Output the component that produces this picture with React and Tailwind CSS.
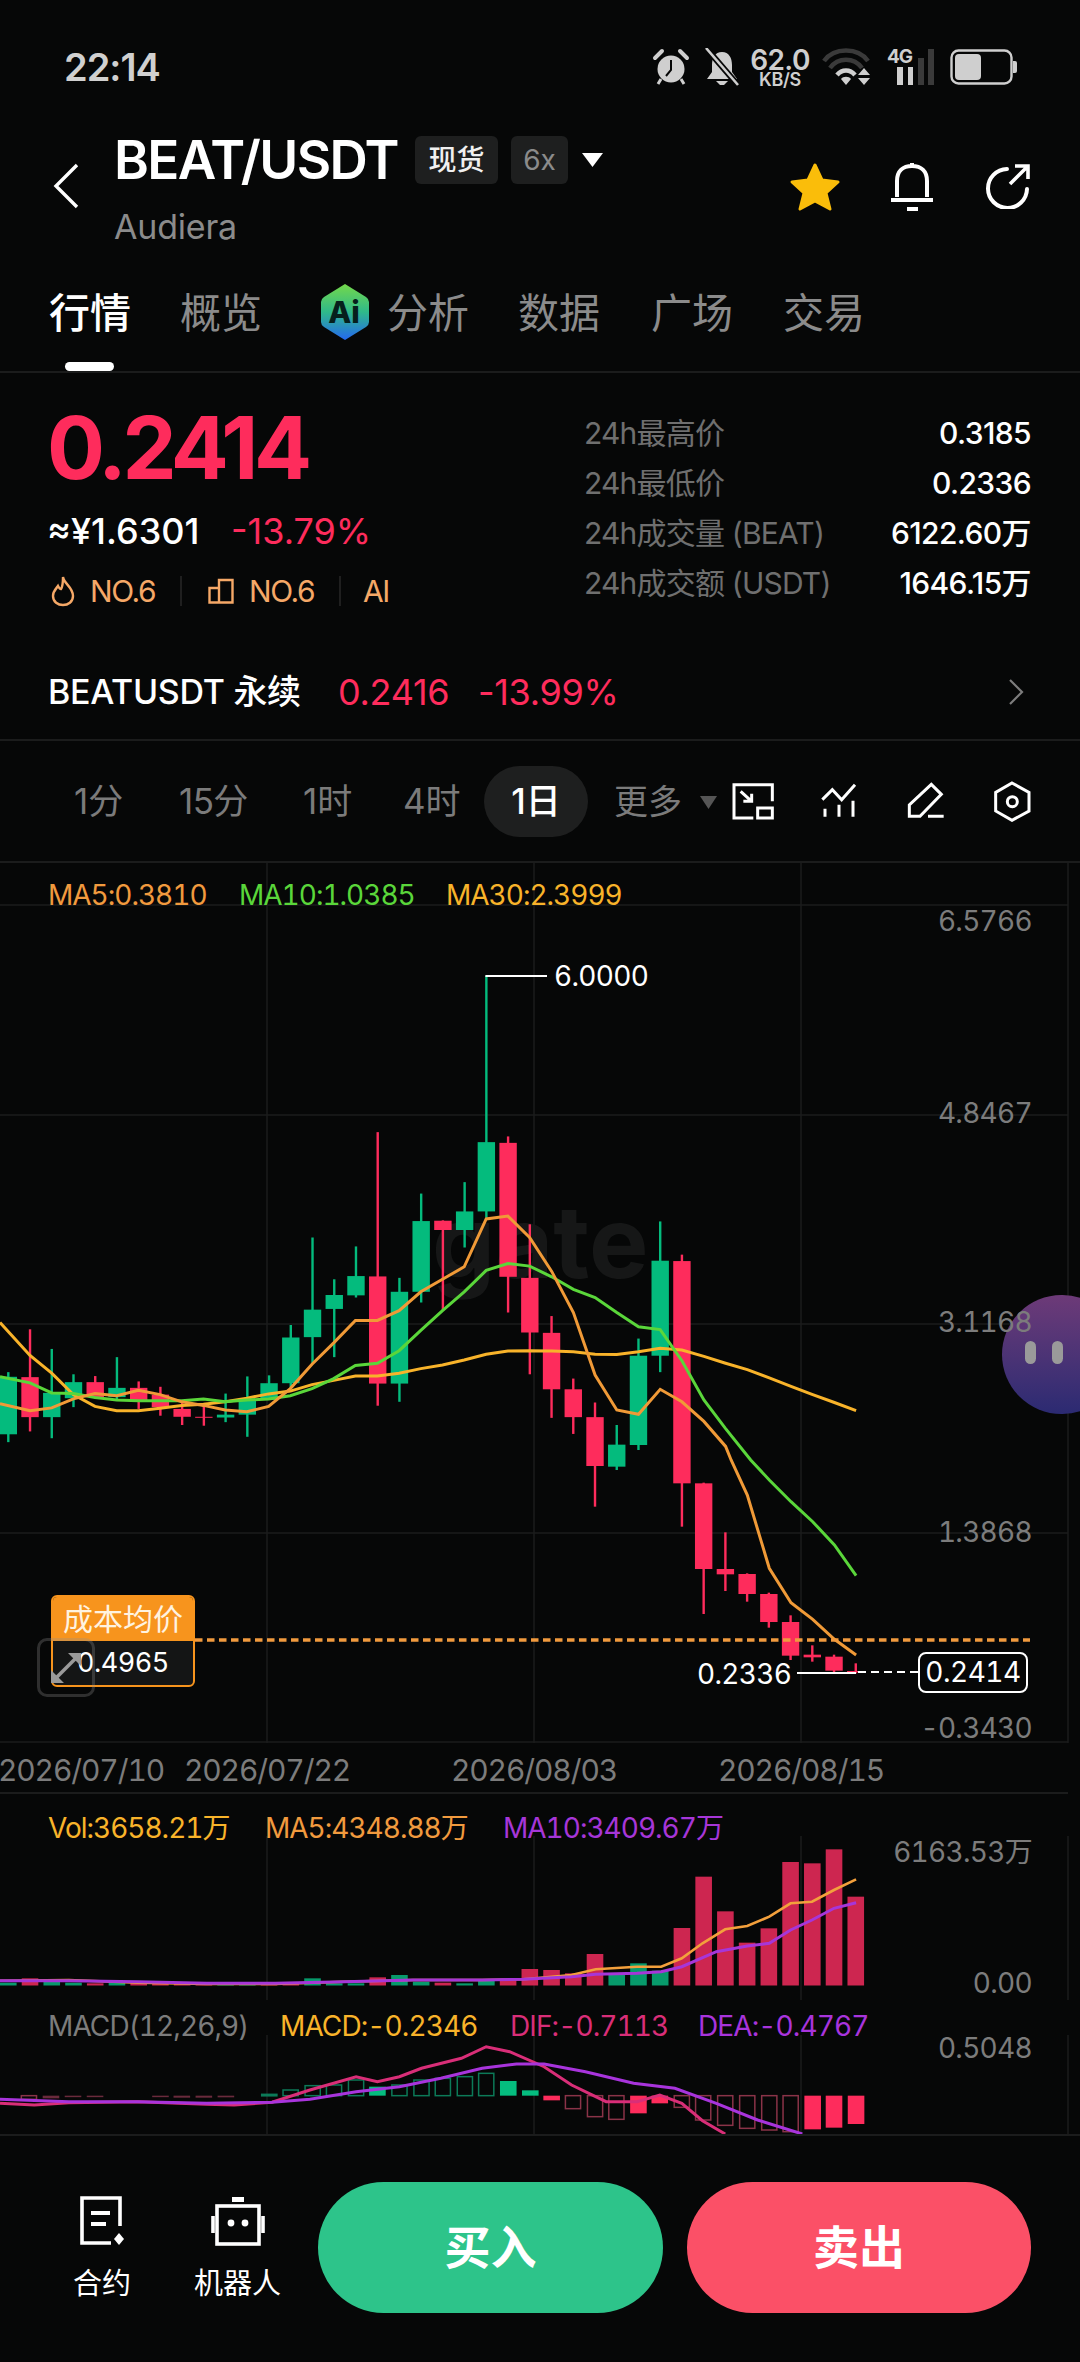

import React from "react";

const z3 = (x, y) => [x / 2.904, 900 + y / 2.8];
const z4 = (x, y) => [540 + x / 2.904, 900 + y / 2.8];
const z6 = (x, y) => [540 + x / 2.904, 1460 + y / 3];
const z7 = (x, y) => [x / 1.452, 1760 + y / 3];
const Y3 = (y) => 900 + y / 2.8;
const Y6 = (y) => 1460 + y / 3;
const pts = (a) => a.map((p) => p[0].toFixed(1) + "," + p[1].toFixed(1)).join(" ");
const cx = (i) => 8.3 + 21.73 * i;
const RED = "#fe2c5c";
const GREEN = "#04bb7d";

// [color, wickTop, wickBottom, bodyTop, bodyBottom]
const C = [
  ["g", Y3(1322), Y3(1518), Y3(1335), Y3(1496)],
  ["r", Y3(1202), Y3(1488), Y3(1336), Y3(1448)],
  ["g", Y3(1257), Y3(1507), Y3(1380), Y3(1448)],
  ["g", Y3(1328), Y3(1420), Y3(1350), Y3(1395)],
  ["r", Y3(1333), Y3(1395), Y3(1350), Y3(1392)],
  ["g", Y3(1280), Y3(1400), Y3(1366), Y3(1392)],
  ["r", Y3(1348), Y3(1425), Y3(1366), Y3(1402)],
  ["r", Y3(1363), Y3(1444), Y3(1385), Y3(1420)],
  ["r", Y3(1405), Y3(1470), Y3(1425), Y3(1447)],
  ["r", Y3(1415), Y3(1472), Y3(1447), Y3(1449)],
  ["g", Y3(1382), Y3(1462), Y3(1441), Y3(1449)],
  ["g", Y3(1334), Y3(1503), Y3(1400), Y3(1441)],
  ["g", Y3(1331), Y3(1400), Y3(1353), Y3(1400)],
  ["g", Y3(1190), Y3(1365), Y3(1225), Y3(1353)],
  ["g", Y3(945), Y3(1298), Y3(1147), Y3(1224)],
  ["g", Y3(1062), Y3(1280), Y3(1106), Y3(1145)],
  ["g", Y3(970), Y3(1113), Y3(1053), Y3(1107)],
  ["r", Y3(650), Y3(1416), Y3(1054), Y3(1354)],
  ["g", Y3(1058), Y3(1405), Y3(1097), Y3(1354)],
  ["g", Y3(822), Y3(1127), Y3(899), Y3(1097)],
  ["r", Y3(897), Y3(1150), Y3(898), Y3(924)],
  ["g", Y3(790), Y3(973), Y3(872), Y3(924)],
  ["g", Y3(212), Y3(890), Y3(678), Y3(872)],
  ["r", Y3(662), Y3(1155), Y3(680), Y3(1055)],
  ["r", Y3(908), Y3(1328), Y3(1058), Y3(1211)],
  ["r", Y3(1165), Y3(1450), Y3(1212), Y3(1370)],
  ["r", Y3(1340), Y3(1495), Y3(1370), Y3(1448)],
  ["r", Y3(1407), Y6(140), Y3(1448), Y6(18)],
  ["g", Y3(1470), Y6(30), Y3(1525), Y6(20)],
  ["g", Y3(1228), Y3(1540), Y3(1276), Y3(1526)],
  ["g", Y3(900), Y3(1322), Y3(1010), Y3(1276)],
  ["r", Y3(993), Y6(200), Y3(1011), Y6(70)],
  ["r", Y6(68), Y6(462), Y6(70), Y6(327)],
  ["r", Y6(217), Y6(393), Y6(327), Y6(343)],
  ["r", Y6(340), Y6(425), Y6(342), Y6(402)],
  ["r", Y6(398), Y6(503), Y6(402), Y6(486)],
  ["r", Y6(466), Y6(600), Y6(486), Y6(587)],
  ["r", Y6(556), Y6(605), Y6(584), Y6(592)],
  ["r", Y6(584), Y6(636), Y6(590), Y6(632)],
  ["r", Y6(610), Y6(640), Y6(633), Y6(637)],
];

const MA5 = [
  ...[[0,1410],[87,1430],[150,1422],[213,1397],[276,1382],[339,1388],[402,1373],[465,1385],[528,1405],[591,1415],[654,1428],[717,1433],[780,1418],[843,1368],[906,1300],[969,1240],[1032,1177],[1096,1177],[1159,1150],[1222,1097],[1285,1062],[1348,1027],[1412,893],[1475,885],[1538,945]].map((p) => z3(...p)),
  ...[[34,1040],[97,1155],[160,1330],[223,1428],[286,1440],[349,1370],[412,1405],[476,1460],[539,1530]].map((p) => z4(...p)),
  ...[[555,0],[602,105],[666,325],[729,428],[792,478],[855,538],[918,585]].map((p) => z6(...p)),
];
const MA10 = [
  ...[[0,1335],[87,1352],[150,1380],[213,1382],[276,1393],[339,1400],[402,1402],[465,1402],[528,1402],[591,1397],[654,1405],[717,1400],[780,1397],[843,1388],[906,1368],[969,1340],[1032,1303],[1096,1297],[1159,1262],[1222,1205],[1285,1150],[1348,1097],[1412,1037],[1475,1018],[1538,1025]].map((p) => z3(...p)),
  ...[[34,1055],[97,1090],[160,1113],[223,1155],[286,1195],[349,1203],[412,1290],[476,1400],[539,1480]].map((p) => z4(...p)),
  ...[[612,0],[666,60],[729,125],[792,185],[855,255],[918,347]].map((p) => z6(...p)),
];
const MA30 = [
  ...[[0,1183],[87,1275],[150,1325],[213,1385],[276,1418],[339,1430],[402,1430],[465,1423],[528,1415],[591,1412],[654,1405],[717,1395],[780,1383],[843,1375],[906,1357],[969,1345],[1032,1333],[1096,1333],[1159,1325],[1222,1312],[1285,1302],[1348,1288],[1412,1272],[1475,1263],[1538,1262]].map((p) => z3(...p)),
  ...[[34,1263],[97,1265],[160,1272],[223,1273],[286,1265],[349,1255],[412,1260],[476,1278],[539,1297],[602,1315],[666,1338],[729,1362],[792,1385],[855,1407],[918,1430]].map((p) => z4(...p)),
];

const VOL = [
  ["g",668],["r",655],["g",657],["g",668],["r",670],["g",665],["r",668],["r",672],["r",672],["r",673],["g",672],["g",672],["r",672],
  ["r",670],["g",655],["g",670],["g",670],["r",652],["g",645],["g",665],["r",668],["g",670],["g",662],["r",660],["r",627],["r",630],["r",640],["r",582],
  ["g",640],["g",610],["g",632],["r",504],["r",350],["r",454],["r",548],["r",505],["r",306],["r",310],["r",268],["r",410],
];
const VMA5 = [[0,662],[100,660],[200,668],[300,672],[400,672],[500,665],[600,660],[700,660],[760,658],[830,645],[865,628],[925,620],[960,620],[990,595],[1020,550],[1053,508],[1085,498],[1117,470],[1148,430],[1179,425],[1211,390],[1243,358]].map((p) => z7(...p));
const VMA10 = [[0,662],[100,662],[200,665],[300,670],[400,670],[500,665],[600,660],[700,660],[760,658],[830,650],[865,643],[925,640],[960,635],[990,620],[1040,575],[1085,558],[1117,550],[1148,510],[1179,480],[1211,445],[1243,428]].map((p) => z7(...p));

// [z7 x, value y, solid?]
const HIST = [
  [42,1018,0,"r"],[74,1015,1,"d"],[106,1011,1,"d"],[138,1011,1,"d"],[233,1011,1,"d"],[264,1013,1,"d"],[296,1013,1,"d"],[328,1012,1,"d"],
  [391,1003,0,"g"],[422,990,0,"g"],[454,977,0,"g"],[485,975,0,"g"],[517,960,0,"g"],[548,980,1,"g"],[580,975,0,"g"],[612,960,0,"g"],[643,955,0,"g"],[675,950,0,"g"],[706,940,0,"g"],[738,963,1,"g"],[770,991,1,"g"],
  [801,1021,1,"r"],[832,1046,0,"r"],[864,1070,0,"r"],[895,1078,0,"r"],[927,1060,1,"r"],[958,1030,1,"r"],[990,1042,0,"r"],[1021,1080,0,"r"],[1053,1096,0,"r"],[1085,1105,0,"r"],[1117,1110,0,"r"],[1148,1115,0,"r"],[1180,1108,1,"r"],[1211,1103,1,"r"],[1243,1092,1,"r"],
];
const DIF = [[0,1030],[50,1035],[100,1028],[200,1025],[300,1033],[340,1035],[395,1027],[450,990],[517,950],[548,965],[580,950],[612,925],[670,895],[706,860],[740,875],[790,920],[830,975],[880,1025],[925,1025],[958,1005],[990,1030],[1020,1082],[1053,1122]].map((p) => z7(...p));
const DEA = [[0,1018],[100,1025],[200,1025],[300,1030],[395,1027],[450,1018],[517,995],[580,980],[640,955],[700,925],[750,912],[790,912],[850,935],[920,970],[980,985],[1040,1030],[1100,1080],[1165,1122]].map((p) => z7(...p));

function Chart() {
  return (
    <svg className="absolute inset-0" width="1080" height="880" viewBox="0 863 1080 880">
      {[905, 1115, 1324, 1533, 1742].map((y) => (
        <line key={y} x1="0" x2="1068" y1={y} y2={y} stroke="#1b1c1c" strokeWidth="1.5" />
      ))}
      {[267, 534, 801, 1068].map((x) => (
        <line key={x} x1={x} x2={x} y1="863" y2="1743" stroke="#1b1c1c" strokeWidth="1.5" />
      ))}
      <text x="432" y="1278" fontFamily="Inter" fontWeight="700" fontSize="100" fill="#161717">gate</text>
      {C.map((c, i) => {
        const col = c[0] === "g" ? GREEN : RED;
        return (
          <g key={i} fill={col}>
            <rect x={cx(i) - 1.2} width="2.4" y={c[1]} height={c[2] - c[1]} />
            <rect x={cx(i) - 8.7} width="17.4" y={c[3]} height={Math.max(c[4] - c[3], 1)} />
          </g>
        );
      })}
      <polyline points={pts(MA30)} fill="none" stroke="#f8b32a" strokeWidth="3" />
      <polyline points={pts(MA10)} fill="none" stroke="#5ad63a" strokeWidth="3" />
      <polyline points={pts(MA5)} fill="none" stroke="#f09a37" strokeWidth="3" />
      <polyline points="486.4,977 486.4,976 547,976" fill="none" stroke="#ffffff" strokeWidth="2" />
      <line x1="195" x2="1030" y1="1640" y2="1640" stroke="#f19a3e" strokeWidth="3.6" strokeDasharray="7.5 4.5" />
      <line x1="797" x2="856" y1="1673" y2="1673" stroke="#ffffff" strokeWidth="2" />
      <line x1="858" x2="918" y1="1672" y2="1672" stroke="#ffffff" strokeWidth="2" strokeDasharray="8 5" />
    </svg>
  );
}

function Vol() {
  return (
    <svg className="absolute inset-0" width="1080" height="206" viewBox="0 1794 1080 206">
      {[267, 534, 801, 1068].map((x) => (
        <line key={x} x1={x} x2={x} y1="1836" y2="2000" stroke="#1b1c1c" strokeWidth="1.5" />
      ))}
      {VOL.map((v, i) => {
        const t = 1760 + v[1] / 3;
        return <rect key={i} x={cx(i) - 8.3} width="16.6" y={t} height={1985.5 - t} fill={v[0] === "g" ? "#079a6b" : "#cd2650"} />;
      })}
      <polyline points={pts(VMA5)} fill="none" stroke="#f3a03c" strokeWidth="2.6" />
      <polyline points={pts(VMA10)} fill="none" stroke="#a636d8" strokeWidth="3" />
    </svg>
  );
}

function Macd() {
  return (
    <svg className="absolute inset-0" width="1080" height="134" viewBox="0 2000 1080 134">
      {[267, 534, 801, 1068].map((x) => (
        <line key={x} x1={x} x2={x} y1="2035" y2="2134" stroke="#1b1c1c" strokeWidth="1.5" />
      ))}
      {HIST.map((h, i) => {
        const x = h[0] / 1.452;
        const base = 1760 + 1007 / 3;
        const v = 1760 + h[1] / 3;
        const t = Math.min(base, v);
        const ht = Math.max(Math.abs(v - base), 1.5);
        const col = h[3] === "d" ? "#6a2a3c" : h[3] === "g" ? (h[2] ? "#05bd7f" : "#0c7a58") : h[2] ? RED : "#8a3348";
        return h[2] ? (
          <rect key={i} x={x - 8.3} width="16.6" y={t} height={ht} fill={col} />
        ) : (
          <rect key={i} x={x - 7.6} width="15.2" y={t} height={ht} fill="none" stroke={col} strokeWidth="1.5" />
        );
      })}
      <polyline points={pts(DIF)} fill="none" stroke="#d92e78" strokeWidth="3" />
      <polyline points={pts(DEA)} fill="none" stroke="#a834dc" strokeWidth="3" />
    </svg>
  );
}

function StatusIcons() {
  const c = "#cfcfcf";
  return (
    <div className="flex items-start h-[40px]">
      <svg width="38" height="38" viewBox="0 0 38 38">
        <circle cx="19" cy="21" r="13.5" fill={c} />
        <path d="M19 12 V22 L14 28" fill="none" stroke="#060707" strokeWidth="2" />
        <path d="M3 10 L10 3 M35 10 L28 3" stroke={c} strokeWidth="4" strokeLinecap="round" />
        <path d="M9 31 L6 36 M29 31 L32 36" stroke={c} strokeWidth="3" />
      </svg>
      <svg width="36" height="38" viewBox="0 0 36 38" className="ml-[14px]">
        <path d="M18 4 C25 4 28 10 28 17 L28 24 L33 31 H3 L8 24 L8 17 C8 10 11 4 18 4 Z" fill={c} />
        <path d="M12 33 H24 L20 37 H16 Z" fill={c} />
        <path d="M3 1 L33 36" stroke="#060707" strokeWidth="6" />
        <path d="M2 0 L34 37" stroke={c} strokeWidth="2.6" />
      </svg>
      <div className="ml-[11px] w-[58px] flex flex-col items-center text-[#cfcfcf] font-semibold">
        <span className="text-[28px] leading-[24px] tracking-[-0.6px]">62.0</span>
        <span className="text-[18px] leading-[15px] tracking-[-0.3px]">KB/S</span>
      </div>
      <svg width="52" height="38" viewBox="0 0 52 38" className="ml-[13px]">
        <path d="M2 13 C12 -1 36 -1 46 13" fill="none" stroke="#3a3a3a" strokeWidth="4.5" />
        <path d="M8 20 C16 9 32 9 40 20" fill="none" stroke="#3a3a3a" strokeWidth="4.5" />
        <path d="M15 27 C20 21 28 21 33 27" fill="none" stroke={c} strokeWidth="4.5" />
        <path d="M19 31 H29 L24 37 Z M19 31 C21 28 27 28 29 31 Z" fill={c} />
        <path d="M36 27 L42 20 L48 27 Z M36 30 H48 L42 37 Z" fill={c} />
      </svg>
      <div className="relative ml-[13px] w-[48px] h-[38px]">
        <span className="absolute left-0 top-0 text-[19px] leading-[18px] font-bold text-[#cfcfcf] tracking-[-1px]">4G</span>
        <svg className="absolute left-0 top-0" width="48" height="38" viewBox="0 0 48 38">
          <rect x="10" y="19" width="6" height="18" fill={c} />
          <rect x="21" y="19" width="5" height="18" fill={c} />
          <rect x="31" y="10" width="6" height="27" fill="#3a3a3a" />
          <rect x="41" y="1" width="6" height="36" fill="#3a3a3a" />
        </svg>
      </div>
      <svg width="68" height="38" viewBox="0 0 68 38" className="ml-[15px]">
        <rect x="1.5" y="2.5" width="60" height="33" rx="7" fill="none" stroke={c} strokeWidth="2.4" />
        <rect x="5" y="6" width="26" height="26" rx="4" fill={c} />
        <path d="M63 13 H65 Q67 13 67 15 V23 Q67 25 65 25 H63 Z" fill={c} />
      </svg>
    </div>
  );
}

function AiIcon() {
  return (
    <svg width="50" height="56" viewBox="0 0 50 56">
      <defs>
        <linearGradient id="aig" x1="0" y1="0" x2="0" y2="1">
          <stop offset="0" stopColor="#74d94a" />
          <stop offset="0.5" stopColor="#2fb98a" />
          <stop offset="1" stopColor="#2468ef" />
        </linearGradient>
      </defs>
      <path d="M25 0 L46 13 Q49 15 49 18 V38 Q49 41 46 43 L25 56 L4 43 Q1 41 1 38 V18 Q1 15 4 13 Z" fill="url(#aig)" />
      <text x="24" y="39" textAnchor="middle" fontFamily="Inter" fontWeight="800" fontSize="30" fill="#06201c">Ai</text>
    </svg>
  );
}

const Tab = ({ children, active }) => (
  <span className={active ? "block w-[80px] whitespace-nowrap text-white font-medium" : "block w-[80px] whitespace-nowrap text-[#8b8b8b]"}>{children}</span>
);

function Stat({ label, value }) {
  return (
    <div className="flex justify-between items-center h-[50px]">
      <span className="text-[#6f6f6f] tracking-[-0.8px]">{label}</span>
      <span className="text-white tracking-[-0.6px] font-medium">{value}</span>
    </div>
  );
}

const Axis = ({ top, children, color = "#7c7c7c" }) => (
  <span className="absolute right-[48px] text-[28px] leading-[36px] tabular-nums tracking-[-0.7px]" style={{ top, color }}>{children}</span>
);

export default function App() {
  return (
    <div className="relative w-[1080px] h-[2362px] overflow-hidden bg-[#060707] text-white font-['Inter','Noto_Sans_CJK_SC',sans-serif]">
      {/* status */}
      <div className="h-[108px] flex justify-between pt-[48px] pl-[64px] pr-[62px]">
        <span className="text-[38px] leading-[38px] font-semibold text-[#d0d0d0] tracking-[-1px]">22:14</span>
        <StatusIcons />
      </div>

      {/* header */}
      <div className="h-[142px] flex">
        <svg width="26" height="46" viewBox="0 0 26 46" className="ml-[53px] mt-[55px]">
          <path d="M24 2 L3 23 L24 44" fill="none" stroke="#fff" strokeWidth="3.4" />
        </svg>
        <div className="ml-[36px] flex flex-col">
          <div className="flex items-start h-[82px] pt-[28px]">
            <span className="-ml-[1px] w-[301px] text-[53px] leading-[48px] font-semibold tracking-[-1.6px]">BEAT/USDT</span>
            <span className="h-[48px] w-[83px] rounded-[6px] bg-[#1e1f1f] text-[28px] leading-[48px] text-center font-medium text-[#f0f0f0]">现货</span>
            <span className="ml-[13px] h-[48px] w-[57px] rounded-[6px] bg-[#1e1f1f] text-[28px] leading-[48px] text-center text-[#8b8b8b]">6x</span>
            <svg width="21" height="14" viewBox="0 0 21 14" className="ml-[14px] mt-[17px]"><path d="M0 0 H21 L10.5 14 Z" fill="#fff" /></svg>
          </div>
          <span className="-ml-[1px] text-[34px] leading-[38px] mt-[18px] text-[#8b8b8b] tracking-[-0.2px]">Audiera</span>
        </div>
        <div className="ml-auto mr-[49px] mt-[52px] flex items-start h-[56px]">
          <svg width="52" height="50" viewBox="0 0 52 50" className="mt-[2px]">
            <path d="M26 3 L33 18 L49 20 L37 31 L41 47 L26 39 L11 47 L15 31 L3 20 L19 18 Z" fill="#fabd0a" stroke="#fabd0a" strokeWidth="3" strokeLinejoin="round" />
          </svg>
          <svg width="46" height="52" viewBox="0 0 46 52" className="ml-[48px]">
            <path d="M23 3 V6 M8 37 V21 C8 11 14 6 23 6 C32 6 38 11 38 21 V37 M2 40 H44 M18 49 H29" fill="none" stroke="#fff" strokeWidth="4" />
          </svg>
          <svg width="46" height="46" viewBox="0 0 46 46" className="ml-[50px] mt-[3px]">
            <path d="M22 6 A19.5 19.5 0 1 0 42 26" fill="none" stroke="#fff" strokeWidth="4" strokeLinecap="round" />
            <path d="M25 21 L43 3 M30 3 H43 V16" fill="none" stroke="#fff" strokeWidth="3.6" />
          </svg>
        </div>
      </div>

      {/* tabs */}
      <div className="relative h-[123px] border-b-2 border-[#1b1c1c]">
        <div className="flex items-start pl-[49px] pt-[35px] text-[41px] leading-[56px]">
          <Tab active>行情</Tab>
          <span className="ml-[51px]"><Tab>概览</Tab></span>
          <span className="ml-[60px] flex -mt-[1px]"><AiIcon /></span>
          <span className="ml-[17px]"><Tab>分析</Tab></span>
          <span className="ml-[51px]"><Tab>数据</Tab></span>
          <span className="ml-[53px]"><Tab>广场</Tab></span>
          <span className="ml-[52px]"><Tab>交易</Tab></span>
        </div>
        <div className="absolute left-[65px] bottom-[0px] w-[49px] h-[9px] rounded-full bg-white" />
      </div>

      {/* price */}
      <div className="h-[245px] flex">
        <div className="w-[584px] pl-[47px] flex flex-col">
          <span className="mt-[32px] text-[86px] leading-[86px] font-bold tracking-[-4.4px] text-[#fe2c5c]">0.2414</span>
          <div className="mt-[20px] flex text-[36px] leading-[40px]">
            <span className="w-[184px] font-medium">≈¥1.6301</span>
            <span className="text-[#fe2c5c]">-13.79%</span>
          </div>
          <div className="mt-[20px] ml-[1px] flex items-center h-[40px] text-[30px] text-[#f5a867] tracking-[-1.4px]">
            <svg width="26" height="32" viewBox="0 0 26 32" className="ml-[2px]">
              <path d="M13 2 C14 9 23 12 23 21 C23 27 18 30 13 30 C8 30 3 27 3 21 C3 16 6 14 8 11 C9 13 10 14 11 14 C13 11 13 6 13 2 Z" fill="none" stroke="#f5a867" strokeWidth="2.4" />
            </svg>
            <span className="ml-[14px] w-[66px]">NO.6</span>
            <span className="ml-[24px] w-[2px] h-[30px] bg-[#1f1f1f]" />
            <svg width="26" height="26" viewBox="0 0 26 26" className="ml-[26px]">
              <path d="M1.5 10 H11 V24.5 H1.5 Z M11 24.5 H24.5 V2 H11 V10" fill="none" stroke="#f5a867" strokeWidth="2.4" />
            </svg>
            <span className="ml-[15px] w-[66px]">NO.6</span>
            <span className="ml-[24px] w-[2px] h-[30px] bg-[#1f1f1f]" />
            <span className="ml-[22px]">AI</span>
          </div>
        </div>
        <div className="w-[447px] pt-[35px] text-[30px] font-normal">
          <Stat label="24h最高价" value="0.3185" />
          <Stat label="24h最低价" value="0.2336" />
          <Stat label="24h成交量 (BEAT)" value="6122.60万" />
          <Stat label="24h成交额 (USDT)" value="1646.15万" />
        </div>
      </div>

      {/* perpetual */}
      <div className="h-[123px] border-b-2 border-[#1b1c1c] flex items-start pt-[53px] pl-[48px] text-[34px] leading-[42px] tracking-[-0.3px]">
        <span className="w-[290px] font-medium">BEATUSDT 永续</span>
        <span className="w-[140px] text-[36px] text-[#fe2c5c]">0.2416</span>
        <span className="text-[36px] text-[#fe2c5c]">-13.99%</span>
        <svg width="16" height="26" viewBox="0 0 16 26" className="ml-auto mr-[56px] mt-[8px]">
          <path d="M2 1 L14 13 L2 25" fill="none" stroke="#7d7d7d" strokeWidth="2.2" />
        </svg>
      </div>

      {/* intervals */}
      <div className="h-[122px] flex items-center text-[35px] text-[#7b7b7b] border-b-2 border-[#1b1c1c]">
        <span className="ml-[74px] w-[105px]">1分</span>
        <span className="w-[124px] tracking-[-0.6px]">15分</span>
        <span className="w-[100px]">1时</span>
        <span className="w-[81px]">4时</span>
        <span className="w-[104px] h-[71px] rounded-full bg-[#1e1f1f] text-white font-medium text-center leading-[71px]">1日</span>
        <span className="ml-[26px] w-[86px] text-[34px]">更多</span>
        <svg width="17" height="13" viewBox="0 0 17 13" className="mt-[2px]"><path d="M0 0 H17 L8.5 13 Z" fill="#555" /></svg>
        <svg width="45" height="39" viewBox="30 70 135 117" className="ml-[13px]">
          <path d="M100 178 H42 V78 H157 V128 M113 148 H157 V178 H113 Z M62 98 L95 128 M95 105 V128 H70" fill="none" stroke="#fff" strokeWidth="9" />
        </svg>
        <svg width="40" height="38" viewBox="300 72 120 114" className="ml-[44px]">
          <path d="M310 125 L340 95 L368 125 L408 80 M318 152 V176 M360 140 V176 M402 128 V176" fill="none" stroke="#fff" strokeWidth="9" />
        </svg>
        <svg width="38" height="41" viewBox="562 66 114 123" className="ml-[47px]">
          <path d="M572 172 V138 L638 76 L668 106 L604 172 Z M628 172 H675" fill="none" stroke="#fff" strokeWidth="9" />
        </svg>
        <svg width="38" height="41" viewBox="824 66 114 123" className="ml-[49px]">
          <path d="M881 72 L932 100 V156 L881 184 L832 156 V100 Z" fill="none" stroke="#fff" strokeWidth="9" />
          <circle cx="882" cy="128" r="15" fill="none" stroke="#fff" strokeWidth="9" />
        </svg>
      </div>

      {/* main chart */}
      <div className="relative h-[880px]">
        <Chart />
        {/* floating assistant */}
        <div className="absolute left-[1002px] top-[432px] w-[120px] h-[119px] rounded-full bg-gradient-to-b from-[#6d3a78] to-[#2b2a72]">
          <div className="absolute left-[23px] top-[46px] w-[11px] h-[23px] rounded-full bg-[#9a9a9a]" />
          <div className="absolute left-[50px] top-[46px] w-[11px] h-[23px] rounded-full bg-[#9a9a9a]" />
        </div>
        <div className="absolute left-[48px] top-[14px] flex text-[28px] leading-[36px] tracking-[-1px] tabular-nums">
          <span className="w-[191px] text-[#f19a3e]">MA5:0.3810</span>
          <span className="w-[207px] text-[#5ad63a]">MA10:1.0385</span>
          <span className="text-[#f8b32a]">MA30:2.3999</span>
        </div>
        <Axis top={40}>6.5766</Axis>
        <Axis top={232}>4.8467</Axis>
        <Axis top={441}>3.1168</Axis>
        <Axis top={651}>1.3868</Axis>
        <Axis top={847}>-0.3430</Axis>
        <span className="absolute left-[554px] top-[95px] text-[28px] leading-[36px] tabular-nums tracking-[-0.7px]">6.0000</span>
        <span className="absolute left-[697px] top-[793px] text-[28px] leading-[36px] tabular-nums tracking-[-0.7px]">0.2336</span>
        <span className="absolute left-[918px] top-[789px] w-[110px] h-[41px] rounded-[8px] border-2 border-white bg-[#060707] text-[28px] leading-[37px] text-center tabular-nums tracking-[-0.5px]">0.2414</span>

        {/* cost label */}
        <div className="absolute left-[51px] top-[732px] w-[144px] h-[92px] rounded-[6px] border-2 border-[#f7941d] bg-[#141515] overflow-hidden">
          <div className="h-[44px] bg-[#f7941d] text-[30px] leading-[44px] text-center text-[#fff3e0] whitespace-nowrap">成本均价</div>
          <div className="pl-[24px] text-[27px] leading-[44px] tabular-nums tracking-[-0.5px]">0.4965</div>
        </div>
        <div className="absolute left-[37px] top-[775px] w-[58px] h-[59px] rounded-[10px] border-[3px] border-[#8f8f8f]/30 flex items-center justify-center">
          <svg width="30" height="30" viewBox="0 0 30 30">
            <path d="M6 24 L24 6" stroke="#9a9a9a" strokeWidth="3.6" />
            <path d="M0 30 V17 L13 30 Z M30 0 V13 L17 0 Z" fill="#9a9a9a" />
          </svg>
        </div>
      </div>

      {/* date axis */}
      <div className="relative h-[51px] text-[30px] leading-[36px] text-[#7c7c7c] tabular-nums tracking-[-1.1px]">
        <span className="absolute left-[-19px] top-[9px] w-[200px] text-center">2026/07/10</span>
        <span className="absolute left-[167px] top-[9px] w-[200px] text-center">2026/07/22</span>
        <span className="absolute left-[434px] top-[9px] w-[200px] text-center">2026/08/03</span>
        <span className="absolute left-[701px] top-[9px] w-[200px] text-center">2026/08/15</span>
        <div className="absolute left-0 bottom-0 w-[1068px] h-[2px] bg-[#1b1c1c]" />
      </div>

      {/* volume */}
      <div className="relative h-[206px]">
        <Vol />
        <div className="absolute left-[48px] top-[16px] flex text-[28px] leading-[36px] tracking-[-1px] tabular-nums">
          <span className="w-[217px] text-[#f8b32a]">Vol:3658.21万</span>
          <span className="w-[238px] text-[#f19a3e]">MA5:4348.88万</span>
          <span className="text-[#a636d8]">MA10:3409.67万</span>
        </div>
        <Axis top={40}>6163.53万</Axis>
        <Axis top={171}>0.00</Axis>
      </div>

      {/* macd */}
      <div className="relative h-[134px]">
        <Macd />
        <div className="absolute left-[48px] top-[8px] flex text-[28px] leading-[36px] tracking-[-0.9px] tabular-nums">
          <span className="w-[232px] text-[#7c7c7c]">MACD(12,26,9)</span>
          <span className="w-[230px] text-[#f8b32a]">MACD:-0.2346</span>
          <span className="w-[188px] text-[#d92e78]">DIF:-0.7113</span>
          <span className="text-[#a834dc]">DEA:-0.4767</span>
        </div>
        <Axis top={30}>0.5048</Axis>
      </div>

      {/* bottom */}
      <div className="h-[228px] border-t-2 border-[#1b1c1c] flex items-start">
        <div className="ml-[74px] mt-[60px] w-[56px] flex flex-col items-center">
          <svg width="46" height="50" viewBox="0 0 46 50">
            <path d="M41 30 V2 H3 V47 H32" fill="none" stroke="#fff" strokeWidth="3.6" />
            <path d="M12 17 H31 M12 28 H27" stroke="#fff" strokeWidth="4" />
            <path d="M40 37 L45 43 L40 49 L35 43 Z" fill="#fff" />
          </svg>
          <span className="mt-[20px] text-[29px] leading-[36px] whitespace-nowrap">合约</span>
        </div>
        <div className="ml-[63px] mt-[60px] w-[89px] flex flex-col items-center">
          <svg width="54" height="50" viewBox="0 0 54 50">
            <path d="M21 1 H33 V6 H21 Z" fill="#fff" />
            <rect x="6" y="10" width="42" height="38" fill="none" stroke="#fff" strokeWidth="3.6" />
            <path d="M2 20 V37 M52 20 V37" stroke="#fff" strokeWidth="3.6" />
            <circle cx="20" cy="27" r="3.4" fill="#fff" />
            <circle cx="34" cy="27" r="3.4" fill="#fff" />
          </svg>
          <span className="mt-[20px] text-[29px] leading-[36px] whitespace-nowrap">机器人</span>
        </div>
        <div className="ml-[36px] mt-[46px] w-[345px] h-[131px] rounded-full bg-[#2dc48a] text-[46px] leading-[131px] text-center font-bold">买入</div>
        <div className="ml-[24px] mt-[46px] w-[344px] h-[131px] rounded-full bg-[#fb5067] text-[46px] leading-[131px] text-center font-bold">卖出</div>
      </div>
    </div>
  );
}
